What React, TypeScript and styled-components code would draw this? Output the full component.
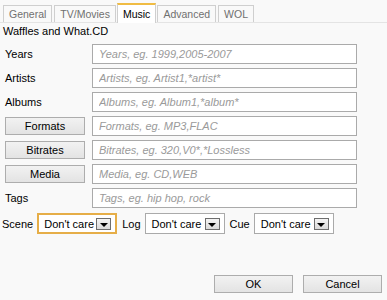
import { Fragment } from "react";
import styled, { createGlobalStyle } from "styled-components";

const GlobalStyle = createGlobalStyle`
  html, body {
    margin: 0;
    padding: 0;
    background: #f9f9f9;
  }
  body {
    font-family: "Liberation Sans", Arial, sans-serif;
    font-size: 11px;
    color: #000;
  }
`;

const Page = styled.div`
  width: 387px;
  height: 300px;
  display: flex;
  flex-direction: column;
  box-sizing: border-box;
  overflow: hidden;
`;

const TabBar = styled.div`
  display: flex;
  align-items: flex-end;
  gap: 2px;
  height: 22px;
  padding-left: 3px;
  border-bottom: 1px solid #e4e4e4;
`;

const Tab = styled.div<{ $active?: boolean }>`
  display: flex;
  align-items: center;
  box-sizing: border-box;
  padding: 0 5px;
  height: ${(p) => (p.$active ? "20px" : "17px")};
  margin: ${(p) => (p.$active ? "0 -1px -1px" : "0")};
  border: 1px solid #cfcfcf;
  border-bottom: none;
  border-top: ${(p) => (p.$active ? "2px solid #f0bc44" : "1px solid #cfcfcf")};
  background: ${(p) => (p.$active ? "#fff" : "#f9f9f9")};
  color: ${(p) => (p.$active ? "#000" : "#707070")};
  font-size: 10.5px;
`;

const Heading = styled.div`
  padding: 2px 3px 0;
  height: 19px;
  line-height: 13px;
`;

const Form = styled.div`
  display: grid;
  grid-template-columns: 87px 265px;
  grid-auto-rows: 20px;
  row-gap: 4px;
  padding-left: 5px;
`;

const Label = styled.div`
  display: flex;
  align-items: center;
`;

const FieldButton = styled.button`
  align-self: center;
  width: 80px;
  height: 18px;
  padding: 0;
  box-sizing: border-box;
  border: 1px solid #adadad;
  background: linear-gradient(#f2f2f2, #e3e3e3);
  font-family: inherit;
  font-size: 11px;
  color: #000;
`;

const TextField = styled.input`
  box-sizing: border-box;
  width: 265px;
  height: 20px;
  border: 1px solid #aaaaaa;
  background: #fff;
  padding: 0 6px;
  font-family: inherit;
  font-size: 11px;
  outline: none;
  &::placeholder {
    color: #9a9a9a;
    font-style: italic;
  }
`;

const FilterRow = styled.div`
  display: flex;
  align-items: center;
  gap: 4px;
  margin-top: 5px;
  padding-left: 2px;
  height: 21px;
`;

const FilterLabel = styled.span`
  margin-left: 1px;
`;

const Select = styled.div<{ $focused?: boolean }>`
  box-sizing: border-box;
  width: 80px;
  height: 21px;
  display: flex;
  align-items: center;
  justify-content: space-between;
  padding: 0 4px 0 ${(p) => (p.$focused ? "5px" : "6px")};
  border: ${(p) => (p.$focused ? "2px solid #e6ae48" : "1px solid #aaaaaa")};
  background: #fff;
`;

const Arrow = styled.span`
  box-sizing: border-box;
  width: 15px;
  height: 12px;
  border: 1px solid #6e6e6e;
  background: linear-gradient(#f4f4f4, #dadada);
  display: flex;
  align-items: center;
  justify-content: center;
  &::after {
    content: "";
    margin-top: 2px;
    border-left: 4px solid transparent;
    border-right: 4px solid transparent;
    border-top: 4px solid #000;
  }
`;

const Footer = styled.div`
  margin-top: auto;
  margin-bottom: 7px;
  display: flex;
  justify-content: flex-end;
  gap: 10px;
  padding-right: 5px;
`;

const DialogButton = styled(FieldButton)`
  width: 79px;
`;

const fields = [
  { label: "Years", hint: "Years, eg. 1999,2005-2007" },
  { label: "Artists", hint: "Artists, eg. Artist1,*artist*" },
  { label: "Albums", hint: "Albums, eg. Album1,*album*" },
  { label: "Formats", hint: "Formats, eg. MP3,FLAC", button: true },
  { label: "Bitrates", hint: "Bitrates, eg. 320,V0*,*Lossless", button: true },
  { label: "Media", hint: "Media, eg. CD,WEB", button: true },
  { label: "Tags", hint: "Tags, eg. hip hop, rock" },
];

const tabs = ["General", "TV/Movies", "Music", "Advanced", "WOL"];

const App = () => {
  return (
    <Page>
      <GlobalStyle />
      <TabBar>
        {tabs.map((t) => (
          <Tab key={t} $active={t === "Music"}>
            {t}
          </Tab>
        ))}
      </TabBar>
      <Heading>Waffles and What.CD</Heading>
      <Form>
        {fields.map((f) => (
          <Fragment key={f.label}>
            {f.button ? (
              <FieldButton>{f.label}</FieldButton>
            ) : (
              <Label>{f.label}</Label>
            )}
            <TextField placeholder={f.hint} />
          </Fragment>
        ))}
      </Form>
      <FilterRow>
        <span>Scene</span>
        <Select $focused>
          Don't care
          <Arrow />
        </Select>
        <FilterLabel>Log</FilterLabel>
        <Select>
          Don't care
          <Arrow />
        </Select>
        <FilterLabel>Cue</FilterLabel>
        <Select>
          Don't care
          <Arrow />
        </Select>
      </FilterRow>
      <Footer>
        <DialogButton>OK</DialogButton>
        <DialogButton>Cancel</DialogButton>
      </Footer>
    </Page>
  );
};

export default App;
